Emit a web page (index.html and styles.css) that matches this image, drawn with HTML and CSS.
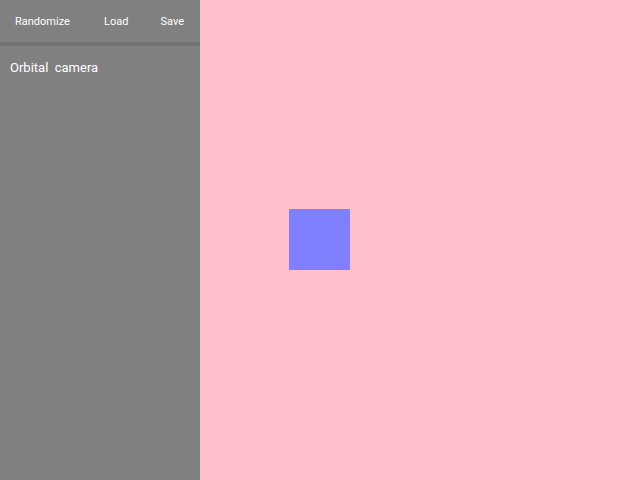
FILE: index.html
```html
<!DOCTYPE html>
<html>
<head>
<meta charset="utf-8">
<link rel="stylesheet" href="styles.css">
</head>
<body>
<div class="app">
  <aside class="sidebar">
    <div class="toolbar">
      <span class="btn btn-randomize">Randomize</span>
      <span class="btn btn-load">Load</span>
      <span class="btn btn-save">Save</span>
    </div>
    <div class="panel">
      <div class="title">Orbital&nbsp; camera</div>
    </div>
  </aside>
  <main class="canvas">
    <div class="square"></div>
  </main>
</div>
</body>
</html>
```

FILE: styles.css
```css
html, body {
  margin: 0;
  padding: 0;
  width: 640px;
  height: 480px;
  overflow: hidden;
}
body {
  font-family: Roboto, "Liberation Sans", sans-serif;
}
.app {
  display: flex;
  width: 640px;
  height: 480px;
}
.sidebar {
  width: 200px;
  background: #808080;
  display: flex;
  flex-direction: column;
}
.toolbar {
  height: 46px;
  box-sizing: border-box;
  border-bottom: 4px solid #737373;
  display: flex;
  align-items: center;
  padding: 0 16px 0 15px;
  justify-content: space-between;
  color: #ffffff;
  font-size: 11px;
}
.btn-load {
  margin-left: 2px;
}
.panel {
  padding: 14px 10px;
}
.title {
  color: #ffffff;
  font-size: 13px;
}
.canvas {
  flex: 1;
  background: #ffc0cb;
  position: relative;
}
.square {
  position: absolute;
  left: 89px;
  top: 209px;
  width: 61px;
  height: 61px;
  background: #8080ff;
}
```
